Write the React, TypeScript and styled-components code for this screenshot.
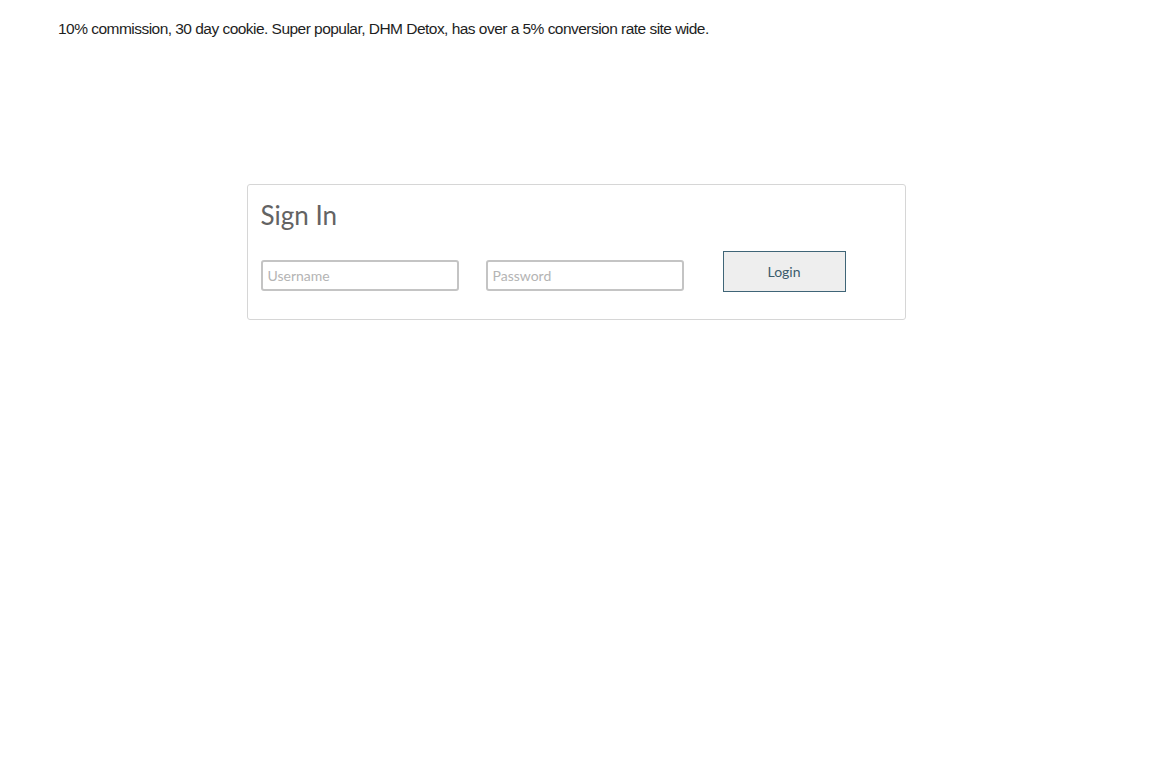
import React from 'react';
import styled, { createGlobalStyle } from 'styled-components';

const GlobalStyle = createGlobalStyle`
  html, body {
    margin: 0;
    padding: 0;
    background: #ffffff;
  }
`;

const Page = styled.div`
  display: flex;
  flex-direction: column;
  align-items: stretch;
  min-height: 768px;
`;

const Intro = styled.p`
  margin: 0;
  padding: 20px 58px 0;
  font-family: 'Liberation Sans', Arial, sans-serif;
  font-size: 15.5px;
  line-height: 18px;
  letter-spacing: -0.53px;
  color: #1e1e1e;
`;

const Card = styled.section`
  align-self: center;
  box-sizing: border-box;
  width: 659px;
  margin-top: 146px;
  padding: 15px 13px 27px;
  border: 1px solid #d6d6d6;
  border-radius: 3px;
  background: #fff;
`;

const Title = styled.h2`
  margin: 0 0 20px;
  font-family: 'Lato', 'Noto Sans', sans-serif;
  font-weight: 400;
  font-size: 26px;
  line-height: 31px;
  color: #636363;
`;

const FormRow = styled.form`
  display: flex;
  align-items: flex-end;
`;

const Field = styled.input`
  box-sizing: border-box;
  width: 198px;
  height: 31px;
  margin: 0 0 1px;
  padding: 0 5px;
  border: 2px solid #c4c4c4;
  border-radius: 3px;
  font-family: 'Lato', 'Noto Sans', sans-serif;
  font-size: 14px;
  color: #444;
  outline: none;

  &::placeholder {
    color: #b4b4b4;
  }

  & + & {
    margin-left: 27px;
  }
`;

const LoginButton = styled.button`
  box-sizing: border-box;
  width: 123px;
  height: 41px;
  margin-left: 39px;
  border: 1px solid #3f6577;
  border-radius: 0;
  background: #eeeeee;
  font-family: 'Lato', 'Noto Sans', sans-serif;
  font-size: 14px;
  color: #3b5c6c;
  cursor: pointer;
`;

export default function App() {
  return (
    <>
      <GlobalStyle />
      <Page>
        <Intro>
          10% commission, 30 day cookie. Super popular, DHM Detox, has over a 5% conversion rate site wide.
        </Intro>
        <Card>
          <Title>Sign In</Title>
          <FormRow onSubmit={(e) => e.preventDefault()}>
            <Field type="text" placeholder="Username" />
            <Field type="password" placeholder="Password" />
            <LoginButton type="submit">Login</LoginButton>
          </FormRow>
        </Card>
      </Page>
    </>
  );
}
